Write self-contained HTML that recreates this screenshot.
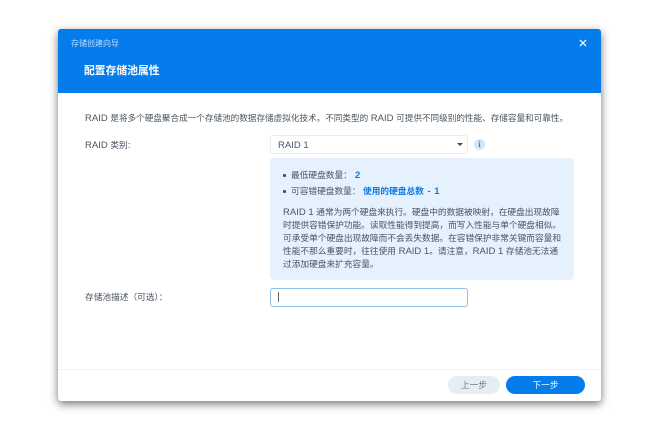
<!DOCTYPE html>
<html lang="zh"><head><meta charset="utf-8"><style>
html,body{margin:0;padding:0;background:#fff;width:660px;height:429px;overflow:hidden}
body{position:relative;font-family:"Liberation Sans","Noto Sans CJK SC",sans-serif;color:#4a5560;font-size:8.7px}
#w{position:absolute;left:0;top:0;width:660px;height:429px;filter:blur(.3px)}
.a{position:absolute;white-space:nowrap;line-height:13px}
i{font-style:normal;font-size:9.5px}
#dlg{position:absolute;left:58px;top:29px;width:543px;height:372px;background:#fff;border-radius:3px;box-shadow:0 3px 9px rgba(0,0,0,.55)}
#hd{position:absolute;left:58px;top:29px;width:543px;height:64px;background:#057ceb;border-radius:3px 3px 0 0}
</style></head><body><div id="w">
<div id="dlg"></div><div id="hd"></div>
<div class="a" style="left:71px;top:37px;font-size:8px;color:#b9dcfb">存储创建向导</div>
<div class="a" style="left:84px;top:65px;font-size:10.8px;font-weight:700;color:#fff">配置存储池属性</div>
<svg style="position:absolute;left:578px;top:38px" width="10" height="10" viewBox="0 0 10 10"><path d="M2 2L8 8M8 2L2 8" stroke="#e4f1fd" stroke-width="1.4" fill="none"/></svg>
<div class="a" style="left:85px;top:112px;font-size:8.6px"><i>RAID </i>是将多个硬盘聚合成一个存储池的数据存储虚拟化技术。不同类型的<i> RAID </i>可提供不同级别的性能、存储容量和可靠性。</div>
<div class="a" style="left:85px;top:139px"><i>RAID </i>类别<i>:</i></div>
<div style="position:absolute;left:270px;top:135px;width:196px;height:17px;border:1px solid #e9edf1;border-radius:3px;background:#fff"></div>
<div class="a" style="left:278px;top:139px"><i>RAID 1</i></div>
<div style="position:absolute;left:457px;top:142.5px;width:0;height:0;border-left:3.5px solid transparent;border-right:3.5px solid transparent;border-top:3.5px solid #444c55"></div>
<div style="position:absolute;left:474px;top:139px;width:11px;height:11px;border-radius:50%;background:#cfe5fa"></div>
<div class="a" style="left:474px;top:139px;width:11px;text-align:center;font-size:8px;line-height:11px;font-weight:700;color:#1a7fd8;font-family:'Liberation Serif',serif">i</div>
<div style="position:absolute;left:270px;top:158px;width:304px;height:122px;background:#e5f1fc;border-radius:4px"></div>
<div style="position:absolute;left:283px;top:174px;width:2.5px;height:2.5px;border-radius:50%;background:#444c55"></div>
<div class="a" style="left:291px;top:169px">最低硬盘数量：</div>
<div class="a" style="left:355px;top:169px;font-weight:700;color:#1279d2"><i>2</i></div>
<div style="position:absolute;left:283px;top:190px;width:2.5px;height:2.5px;border-radius:50%;background:#444c55"></div>
<div class="a" style="left:291px;top:185px">可容错硬盘数量：</div>
<div class="a" style="left:363px;top:185px;font-weight:700;color:#0b7ae6">使用的硬盘总数<i style="word-spacing:1px"> - 1</i></div>
<div class="a" style="left:283px;top:205.5px"><i>RAID 1 </i>通常为两个硬盘来执行。硬盘中的数据被映射，在硬盘出现故障</div>
<div class="a" style="left:283px;top:218.5px">时提供容错保护功能。读取性能得到提高，而写入性能与单个硬盘相似。</div>
<div class="a" style="left:283px;top:231.5px">可承受单个硬盘出现故障而不会丢失数据。在容错保护非常关键而容量和</div>
<div class="a" style="left:283px;top:244.5px">性能不那么重要时，往往使用<i> RAID 1</i>。请注意，<i>RAID 1 </i>存储池无法通</div>
<div class="a" style="left:283px;top:257.5px">过添加硬盘来扩充容量。</div>
<div class="a" style="left:85px;top:291px">存储池描述（可选）：</div>
<div style="position:absolute;left:270px;top:288px;width:196px;height:17px;border:1px solid #8fc1ea;border-radius:3px;background:#fff"></div>
<div style="position:absolute;left:278px;top:292px;width:1px;height:10px;background:#666"></div>
<div style="position:absolute;left:58px;top:369px;width:543px;height:1px;background:#eef0f2"></div>
<div class="a" style="left:448px;top:376px;width:52px;height:18px;line-height:18px;border-radius:9px;background:#e8edf3;text-align:center;color:#6a7580">上一步</div>
<div class="a" style="left:506px;top:376px;width:79px;height:18px;line-height:18px;border-radius:9px;background:#057ceb;text-align:center;color:#fff">下一步</div>
</div></body></html>
